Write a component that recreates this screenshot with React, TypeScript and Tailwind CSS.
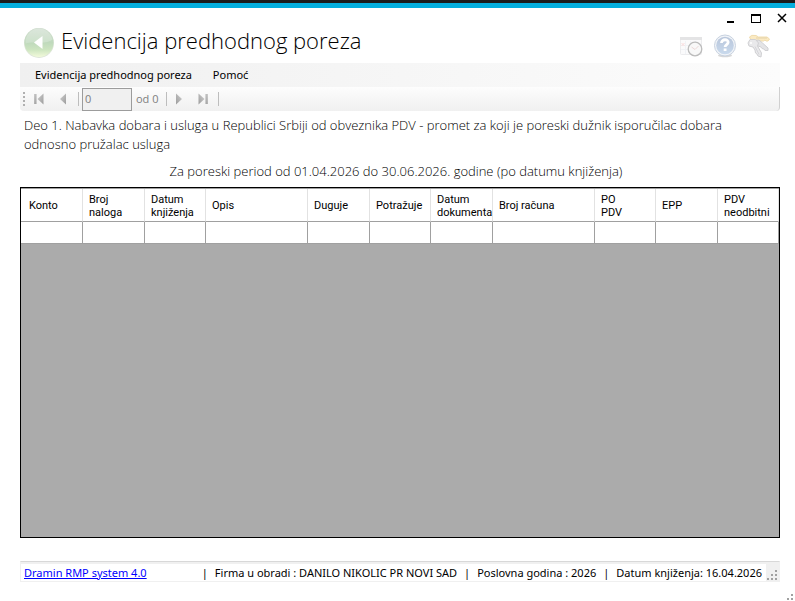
import React from 'react';

const columns: { label: string[]; width: string }[] = [
  { label: ['Konto'], width: 'w-[62px]' },
  { label: ['Broj', 'naloga'], width: 'w-[62px]' },
  { label: ['Datum', 'knjiženja'], width: 'w-[61px]' },
  { label: ['Opis'], width: 'w-[102px]' },
  { label: ['Duguje'], width: 'w-[62px]' },
  { label: ['Potražuje'], width: 'w-[61px]' },
  { label: ['Datum', 'dokumenta'], width: 'w-[62px]' },
  { label: ['Broj računa'], width: 'w-[102px]' },
  { label: ['PO', 'PDV'], width: 'w-[61px]' },
  { label: ['EPP'], width: 'w-[62px]' },
  { label: ['PDV', 'neodbitni'], width: 'w-[61px]' },
];

function BackIcon() {
  return (
    <svg width="32" height="32" viewBox="0 0 32 32" aria-hidden="true">
      <defs>
        <linearGradient id="backFill" x1="0" y1="0" x2="0" y2="1">
          <stop offset="0" stopColor="#d3e0d3" />
          <stop offset="0.5" stopColor="#bfd9bc" />
          <stop offset="0.75" stopColor="#cde5c0" />
          <stop offset="1" stopColor="#f2fadb" />
        </linearGradient>
      </defs>
      <circle cx="16" cy="17" r="15" fill="#dde5d8" />
      <circle cx="16" cy="16.500" r="14.500" fill="url(#backFill)" />
      <path d="M2.500 13.500a13.800 13.800 0 0 1 27 0c-7 6-18 1-27 4z" fill="#ffffff" opacity="0.22" />
      <path d="M11 16.500l8.500-6.500v13z" fill="#ffffff" />
    </svg>
  );
}

function CalendarClockIcon() {
  return (
    <svg width="24" height="24" viewBox="0 0 24 24" aria-hidden="true">
      <rect x="1.500" y="3.500" width="21" height="17" rx="1" fill="#fafafb" stroke="#ececee" />
      <path d="M1 3h22v3H1z" fill="#e4e4e5" />
      <path d="M6.500 7v13M11.500 7v13M16.500 7v13M2 11.500h20M2 15.500h20" stroke="#f0f2f6" />
      <path d="M2.500 9l3 3m0-3l-3 3" stroke="#fbdcdc" />
      <circle cx="16" cy="15" r="6.800" fill="#f8f8f8" stroke="#bcbcbc" strokeWidth="1.300" />
      <path d="M12.500 13l3.500 2.500 3.500-3.500" stroke="#ecd8d8" fill="none" />
    </svg>
  );
}

function HelpIcon() {
  return (
    <svg width="24" height="24" viewBox="0 0 24 24" aria-hidden="true">
      <defs>
        <linearGradient id="helpFill" x1="0" y1="0" x2="0" y2="1">
          <stop offset="0" stopColor="#b9c6db" />
          <stop offset="1" stopColor="#c9daed" />
        </linearGradient>
      </defs>
      <ellipse cx="12" cy="21.500" rx="7" ry="1.800" fill="#d8d8d8" />
      <circle cx="12" cy="11.500" r="10.500" fill="#f1f4f8" stroke="#c8d2e0" />
      <circle cx="12" cy="11.500" r="8.800" fill="url(#helpFill)" />
      <path d="M8.500 9c0-4.500 7.200-4 6.600-.4-.3 2-3 2-3 4.400" fill="none" stroke="#ffffff" strokeWidth="2.800" />
      <rect x="10.700" y="14.500" width="2.800" height="2.500" fill="#ffffff" />
    </svg>
  );
}

function KeysIcon() {
  return (
    <svg width="24" height="24" viewBox="0 0 24 24" aria-hidden="true">
      <path d="M2.500 3Q4 .5 9 1.500l2.500 1.500h8.500l2.500 2-1.500 2h-2l-1-1-1.500 1H11L4 6z" fill="#fbeac2" stroke="#f0dcae" />
      <path d="M9 4h11" stroke="#e5d2aa" />
      <path d="M7 6.500l5-.5 3.500 3 5.500 5v2.500h-3l-1-1.500-2-.5-1-1.500-3-1-2 1z" fill="#e4e4e6" stroke="#d0d0d3" />
      <path d="M1 9L3 5.500l5.500 0 3 3.500-1 3 4 7-.5 4-3-1-1-2-1.500-1-.5-3-2-3-4-1z" fill="#e9e9eb" stroke="#d0d0d3" />
      <circle cx="4" cy="9" r="1" fill="#ffffff" />
      <path d="M8 12.500l4 8" stroke="#d5d5d9" />
    </svg>
  );
}

function NavArrow({ end = false, forward = false }: { end?: boolean; forward?: boolean }) {
  return (
    <svg width="12" height="12" viewBox="0 0 12 12" aria-hidden="true" className={forward ? '-scale-x-100' : ''}>
      <defs>
        <linearGradient id="navFill" x1="0" y1="0" x2="1" y2="1">
          <stop offset="0" stopColor="#cfcfcf" />
          <stop offset="1" stopColor="#9c9c9c" />
        </linearGradient>
      </defs>
      {end && <rect x="1" y="1" width="2.500" height="10" fill="url(#navFill)" />}
      <path d={end ? 'M4.500 6L10.500 0.500v11z' : 'M3 6L9 0.500v11z'} fill="url(#navFill)" />
    </svg>
  );
}

function Grip() {
  const dots = [[8, 0], [4, 4], [8, 4], [0, 8], [4, 8], [8, 8]];
  return (
    <svg width="10" height="10" viewBox="0 0 10 10" aria-hidden="true">
      {dots.map(([x, y]) => (
        <rect key={`${x}-${y}`} x={x} y={y} width="2" height="2" fill="#a0a0a0" />
      ))}
    </svg>
  );
}

function Divider() {
  return <span className="h-[14px] w-px bg-[#bdbdbd]" />;
}

export default function App() {
  return (
    <div className="relative flex min-h-screen flex-col bg-white font-['Open_Sans','Noto_Sans',sans-serif] text-xs text-black">
      <div className="h-[3px] bg-[#1b1b1b]" />
      <div className="h-[5px] bg-[#04aedd]" />

      <div className="flex h-[18px] items-center justify-end gap-4 pt-[2px] pr-2">
        <button aria-label="Minimize" className="flex size-[10px] items-end">
          <span className="ml-[2px] h-[2px] w-[7px] bg-black" />
        </button>
        <button aria-label="Maximize" className="h-[9px] w-[10px] border border-t-2 border-black" />
        <button aria-label="Close">
          <svg width="10" height="10" viewBox="0 0 10 10" aria-hidden="true">
            <path d="M1 1l8 8M9 1l-8 8" stroke="#000000" strokeWidth="1.500" />
          </svg>
        </button>
      </div>

      <div className="flex flex-1 flex-col pr-[15px] pl-5">
        <header className="flex h-[37px] items-start gap-[6px] pl-[3px]">
          <button aria-label="Nazad" className="shrink-0">
            <BackIcon />
          </button>
          <h1 className="flex-1 text-[22px] leading-7 font-light whitespace-nowrap">Evidencija predhodnog poreza</h1>
          <div className="flex gap-[10px] pt-2 pr-[9px]">
            <button aria-label="Kalendar"><CalendarClockIcon /></button>
            <button aria-label="Pomoć"><HelpIcon /></button>
            <button aria-label="Lozinka"><KeysIcon /></button>
          </div>
        </header>

        <nav className="flex h-6 items-center gap-[21px] bg-linear-to-r from-[#f0f0f0] to-[#fcfcfc] pl-[15px] font-['Noto_Sans',sans-serif] text-[11px]">
          <button>Evidencija predhodnog poreza</button>
          <button>Pomoć</button>
        </nav>

        <div className="flex h-6 items-center rounded-b border-r border-[#d0d0d0] bg-linear-to-b from-[#fdfdfd] to-[#f0f0f0] pl-[3px] text-[#808080]">
          <span className="h-[14px] border-l-2 border-dotted border-[#b0b0b0]" />
          <button aria-label="Prvi" className="ml-[8px]" disabled><NavArrow end /></button>
          <button aria-label="Prethodni" className="ml-[12px]" disabled><NavArrow /></button>
          <span className="ml-[9px] flex"><Divider /></span>
          <input
            aria-label="Pozicija"
            defaultValue="0"
            readOnly
            className="ml-[3px] h-[23px] w-[50px] border border-[#9c9c9c] bg-[#f0f0f0] px-[2px] pb-[2px] text-[11px] outline-none"
          />
          <span className="mr-[7px] ml-1 text-[11px]">od 0</span>
          <Divider />
          <button aria-label="Sledeći" className="ml-[6px]" disabled><NavArrow forward /></button>
          <button aria-label="Poslednji" className="mr-[9px] ml-[12px]" disabled><NavArrow end forward /></button>
          <Divider />
        </div>

        <p className="mt-[5px] px-1 text-[13px] leading-[19px] font-light">
          Deo 1. Nabavka dobara i usluga u Republici Srbiji od obveznika PDV - promet za koji je poreski dužnik isporučilac dobara odnosno pružalac usluga
        </p>
        <p className="mt-2 mb-[6px] pr-2 text-center text-[13px] leading-[19px] font-light">
          Za poreski period od 01.04.2026 do 30.06.2026. godine (po datumu knjiženja)
        </p>

        <main className="flex-1 border border-black bg-[#ababab]">
          <table className="w-full table-fixed border-separate border-spacing-0 border-t border-[#a0a0a0] bg-white">
            <thead>
              <tr className="h-[33px]">
                {columns.map((c) => (
                  <th
                    key={c.label.join(' ')}
                    className={`${c.width} border-r border-b border-r-[#e2e2e2] border-b-[#a0a0a0] p-0 pt-px pl-[6px] text-left font-['Roboto',sans-serif] text-[11px] leading-[13px] font-normal whitespace-nowrap first:pl-2`}
                  >
                    {c.label.map((line) => (
                      <span key={line} className="block">{line}</span>
                    ))}
                  </th>
                ))}
              </tr>
            </thead>
            <tbody>
              <tr className="h-[22px]">
                {columns.map((c) => (
                  <td key={c.label.join(' ')} className="border-r border-b border-[#a0a0a0] p-0" />
                ))}
              </tr>
            </tbody>
          </table>
        </main>

        <footer className="mt-[23px] mb-[19px] flex h-[21px] items-stretch border border-t-[#d8d8d8] border-r-[#f0f0f0] border-b-[#f0f0f0] border-l-[#f0f0f0] font-['Noto_Sans',sans-serif] text-[11px]">
          <div className="flex flex-1 items-center justify-between border-t-2 border-[#f0f0f0] pt-px pr-1 pl-[3px] whitespace-nowrap">
            <a href="#" className="text-[#0000ff] underline">Dramin RMP system 4.0</a>
            <div className="flex gap-[7px]">
              <span>|</span>
              <span>Firma u obradi : DANILO NIKOLIC PR NOVI SAD</span>
              <span>|</span>
              <span>Poslovna godina : 2026</span>
              <span>|</span>
              <span>Datum knjiženja: 16.04.2026</span>
            </div>
          </div>
          <div className="flex items-end bg-[#f0f0f0] pr-[2px] pb-px pl-px"><Grip /></div>
        </footer>
      </div>

      <div className="absolute right-0 bottom-0 h-[11px] w-[8px] overflow-hidden">
        <Grip />
      </div>
    </div>
  );
}
